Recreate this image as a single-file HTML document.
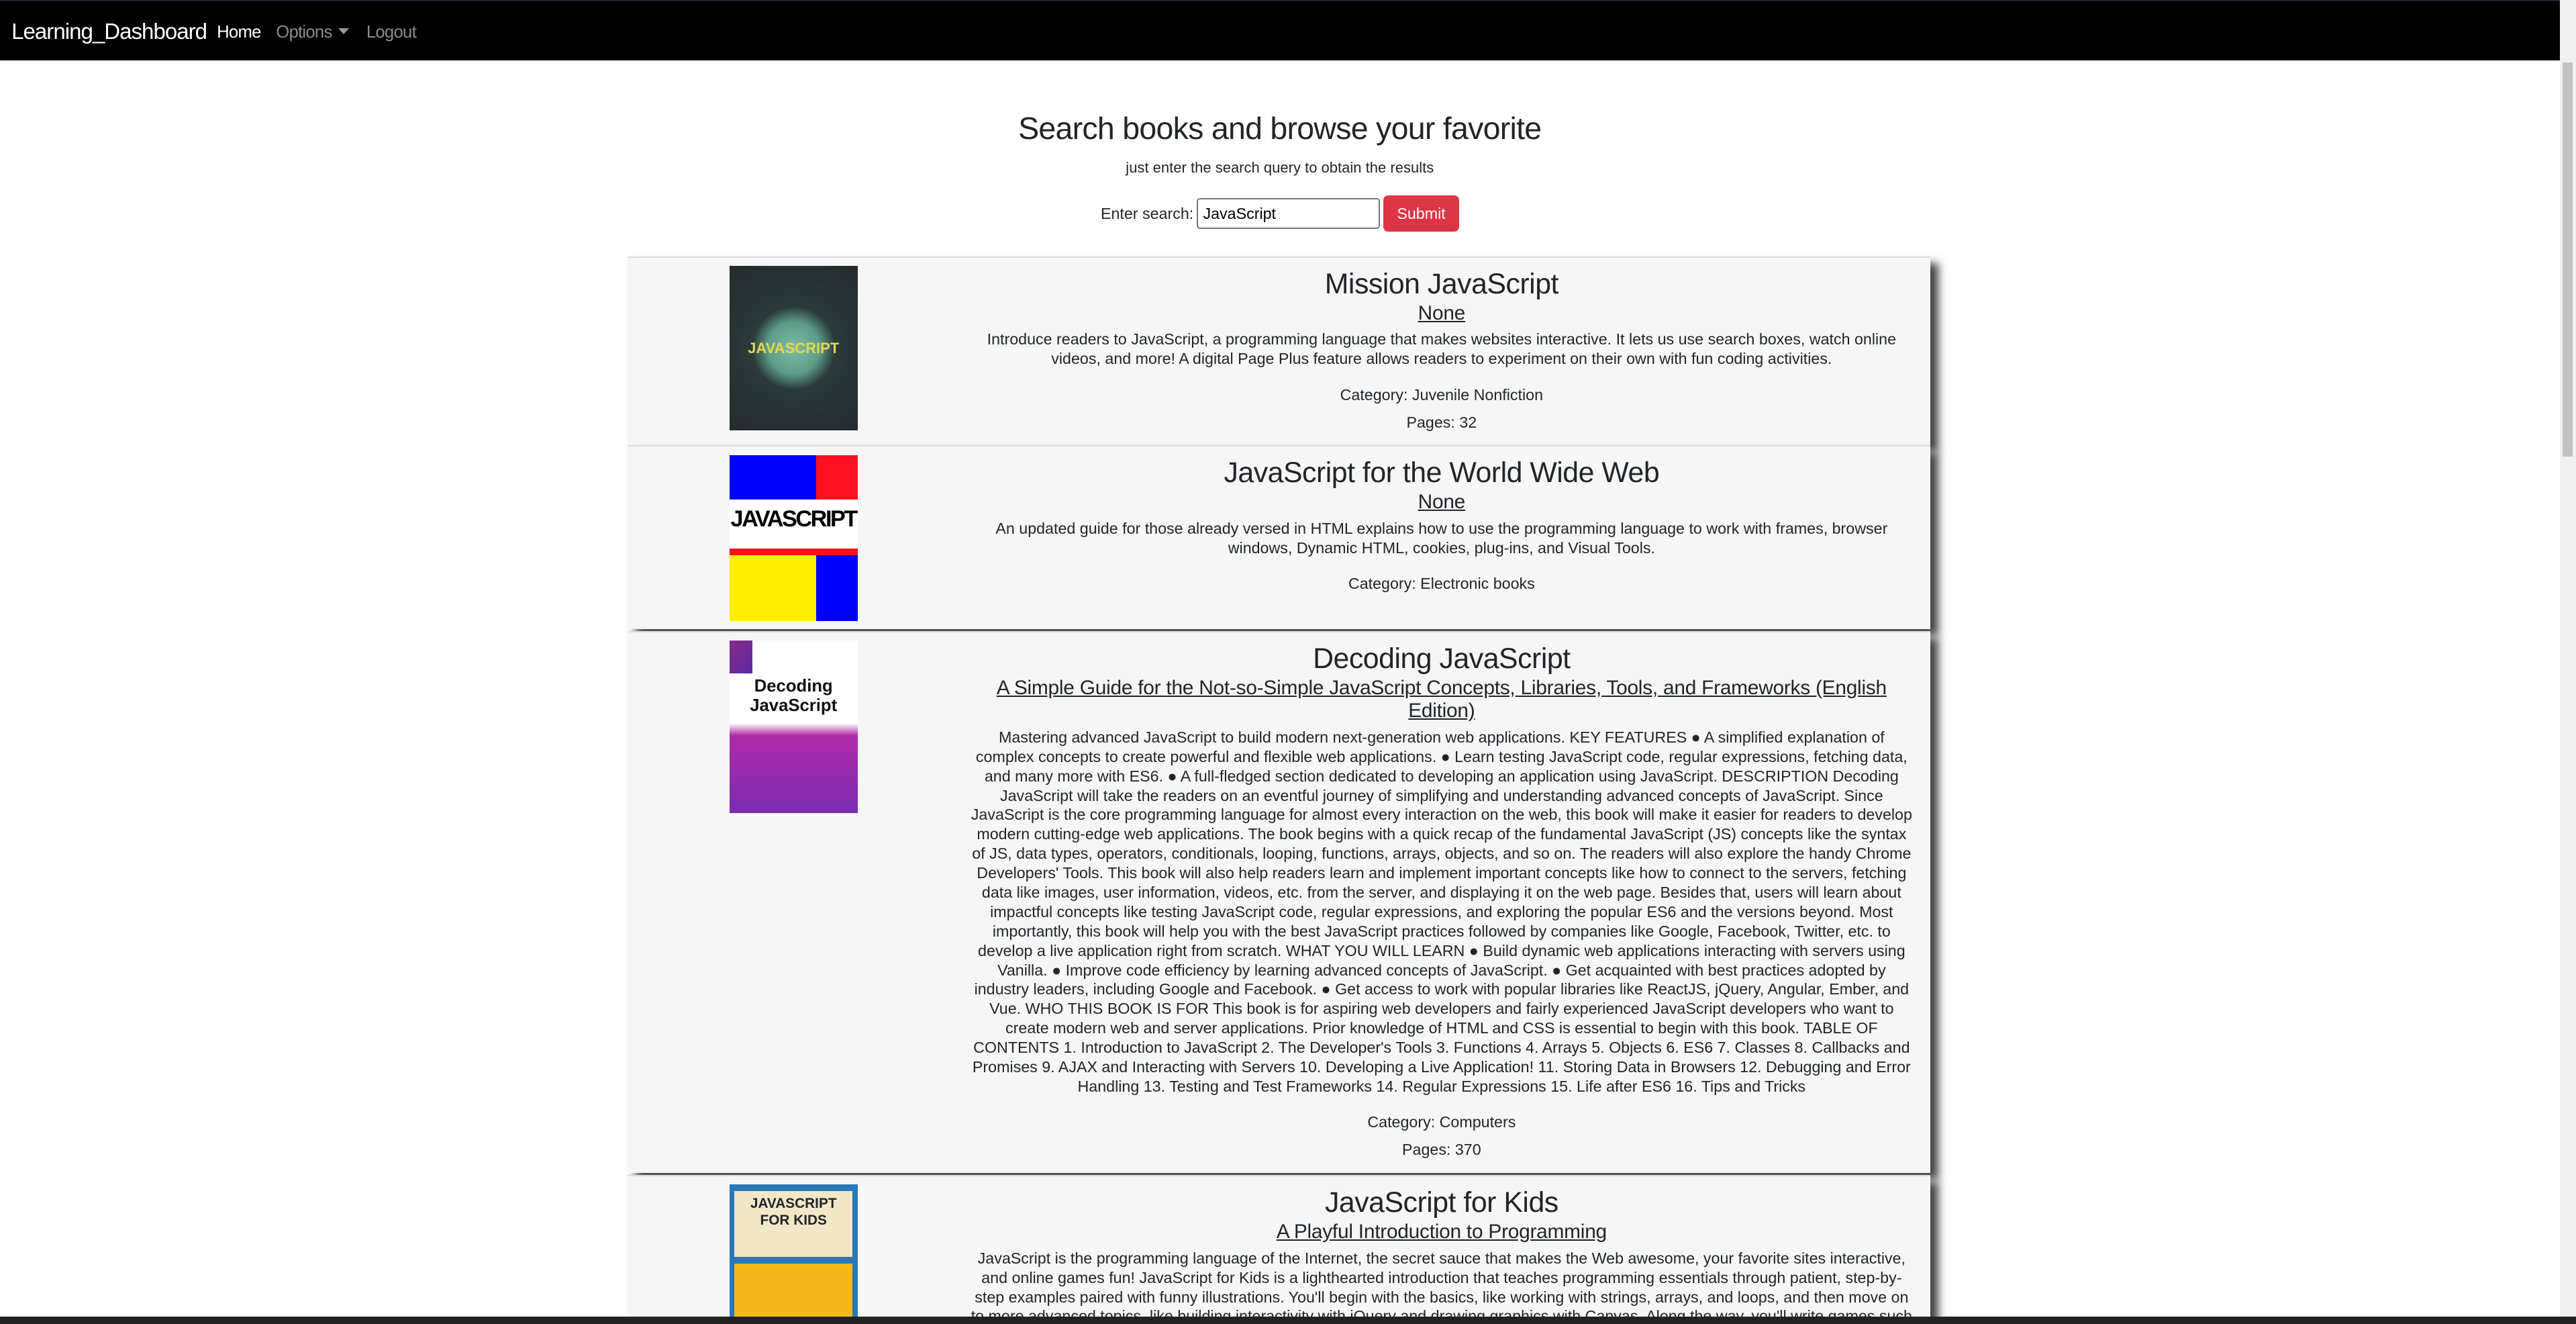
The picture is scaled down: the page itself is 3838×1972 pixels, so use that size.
<!DOCTYPE html>
<html><head><meta charset="utf-8">
<style>
html{margin:0;padding:0;overflow:hidden;height:1972px;}
body{margin:0;padding:0;zoom:2.4477;width:1568px;height:805px;overflow:hidden;background:#fff;font-family:"Liberation Sans",sans-serif;color:#212529;position:relative;}
.nav{position:absolute;left:0;top:0;width:1558px;height:36px;background:#000;border-top:1px solid #1b2530;}
.brand{position:absolute;left:7px;top:11px;font-size:13.5px;color:#fff;letter-spacing:-0.4px}
.nl{position:absolute;top:13px;font-size:10.5px;letter-spacing:-0.3px}
.caret{display:inline-block;border-left:3.5px solid transparent;border-right:3.5px solid transparent;border-top:4px solid #999;vertical-align:2px;margin-left:4px}
.sb{position:absolute;right:0;top:0;width:10px;height:806px;background:#f0f0f0}
.sb i{position:absolute;left:2px;top:38px;width:6px;height:240px;background:#c1c1c1}
h1{position:absolute;left:0;width:1558px;top:67px;margin:0;text-align:center;font-weight:normal;font-size:19px;letter-spacing:-0.3px}
.sub{position:absolute;left:0;width:1558px;top:97px;text-align:center;font-size:9px}
.srch{position:absolute;left:670px;top:119px;font-size:9.5px;display:flex;align-items:center}
.srch input{width:104px;height:15px;border:1px solid #767676;border-radius:2px;margin-left:2px;font-size:9.5px;padding:1px 3px;font-family:inherit}
.srch button{margin-left:2px;width:46px;height:22px;background:#dc3545;color:#fff;border:0;border-radius:3px;font-size:9.5px;font-family:inherit}
.card{position:absolute;left:382px;width:793px;background:#f6f6f6;border-top:1px solid #ddd;box-shadow:5px 4px 5px #444;}
.img{position:absolute;left:62px;top:5px;width:78px;}
.txt{position:absolute;left:209px;width:573px;top:6px;text-align:center;font-size:9.5px;line-height:11.8px;letter-spacing:0}
.t{font-size:17.5px;line-height:20px;letter-spacing:-0.2px}
.s{font-size:12.2px;line-height:14px;text-decoration:underline;margin-top:1px;letter-spacing:-0.1px}
.d{margin-top:3px}
.c{margin-top:10px;font-size:9.5px}
.p{margin-top:5px;font-size:9.5px}
.bot{position:absolute;left:0;top:801px;width:1568px;height:5px;background:#222}
</style></head><body>
<div class="nav">
<div class="brand">Learning_Dashboard</div>
<div class="nl" style="left:132px;color:#fff">Home</div>
<div class="nl" style="left:168px;color:#8c8c8c">Options<span class="caret"></span></div>
<div class="nl" style="left:223px;color:#8c8c8c">Logout</div>
</div>
<div class="sb"><i></i></div>
<h1>Search books and browse your favorite</h1>
<div class="sub">just enter the search query to obtain the results</div>
<div class="srch">Enter search:<input value="JavaScript"><button>Submit</button></div>

<div class="card" style="top:156px;height:114px">
<div class="img" style="height:100px;background:radial-gradient(circle at 50% 50%,#7fbfa8 0,#5c9c88 25%,#2a3a3a 40%,#252a2e 100%)"><div style="position:absolute;top:45px;width:100%;text-align:center;color:#e8d84a;font-size:9px;font-weight:bold">JAVASCRIPT</div></div>
<div class="txt"><div class="t">Mission JavaScript</div><div class="s">None</div>
<div class="d">Introduce readers to JavaScript, a programming language that makes websites interactive. It lets us use search boxes, watch online videos, and more! A digital Page Plus feature allows readers to experiment on their own with fun coding activities.</div>
<div class="c">Category: Juvenile Nonfiction</div><div class="p">Pages: 32</div></div>
</div>

<div class="card" style="top:271px;height:111px">
<div class="img" style="height:101px;background:#fff">
<div style="position:absolute;left:0;top:0;width:53px;height:27px;background:#0000ff"></div>
<div style="position:absolute;left:53px;top:0;width:25px;height:27px;background:#ff1020"></div>
<div style="position:absolute;left:0;top:27px;width:78px;height:30px;color:#000;font-weight:bold;font-size:14px;text-align:center;line-height:24px;letter-spacing:-1px">JAVASCRIPT</div>
<div style="position:absolute;left:0;top:57px;width:78px;height:4px;background:#ff1020"></div>
<div style="position:absolute;left:0;top:61px;width:53px;height:40px;background:#ffee00"></div>
<div style="position:absolute;left:53px;top:61px;width:25px;height:40px;background:#0000ff"></div>
</div>
<div class="txt"><div class="t">JavaScript for the World Wide Web</div><div class="s">None</div>
<div class="d">An updated guide for those already versed in HTML explains how to use the programming language to work with frames, browser windows, Dynamic HTML, cookies, plug-ins, and Visual Tools.</div>
<div class="c">Category: Electronic books</div></div>
</div>

<div class="card" style="top:384px;height:329px">
<div class="img" style="height:105px;background:linear-gradient(#fff 0,#fff 48%,#b02aa8 55%,#7a2bb0 100%)">
<div style="position:absolute;left:0;top:0;width:14px;height:20px;background:linear-gradient(135deg,#8a2a8a,#5a2aa0)"></div>
<div style="position:absolute;top:22px;width:100%;text-align:center;font-weight:bold;font-size:10.5px;line-height:12px;color:#111">Decoding<br>JavaScript</div></div>
<div class="txt"><div class="t">Decoding JavaScript</div><div class="s">A Simple Guide for the Not-so-Simple JavaScript Concepts, Libraries, Tools, and Frameworks (English Edition)</div>
<div class="d">Mastering advanced JavaScript to build modern next-generation web applications. KEY FEATURES ● A simplified explanation of complex concepts to create powerful and flexible web applications. ● Learn testing JavaScript code, regular expressions, fetching data, and many more with ES6. ● A full-fledged section dedicated to developing an application using JavaScript. DESCRIPTION Decoding JavaScript will take the readers on an eventful journey of simplifying and understanding advanced concepts of JavaScript. Since JavaScript is the core programming language for almost every interaction on the web, this book will make it easier for readers to develop modern cutting-edge web applications. The book begins with a quick recap of the fundamental JavaScript (JS) concepts like the syntax of JS, data types, operators, conditionals, looping, functions, arrays, objects, and so on. The readers will also explore the handy Chrome Developers' Tools. This book will also help readers learn and implement important concepts like how to connect to the servers, fetching data like images, user information, videos, etc. from the server, and displaying it on the web page. Besides that, users will learn about impactful concepts like testing JavaScript code, regular expressions, and exploring the popular ES6 and the versions beyond. Most importantly, this book will help you with the best JavaScript practices followed by companies like Google, Facebook, Twitter, etc. to develop a live application right from scratch. WHAT YOU WILL LEARN ● Build dynamic web applications interacting with servers using Vanilla. ● Improve code efficiency by learning advanced concepts of JavaScript. ● Get acquainted with best practices adopted by industry leaders, including Google and Facebook. ● Get access to work with popular libraries like ReactJS, jQuery, Angular, Ember, and Vue. WHO THIS BOOK IS FOR This book is for aspiring web developers and fairly experienced JavaScript developers who want to create modern web and server applications. Prior knowledge of HTML and CSS is essential to begin with this book. TABLE OF CONTENTS 1. Introduction to JavaScript 2. The Developer's Tools 3. Functions 4. Arrays 5. Objects 6. ES6 7. Classes 8. Callbacks and Promises 9. AJAX and Interacting with Servers 10. Developing a Live Application! 11. Storing Data in Browsers 12. Debugging and Error Handling 13. Testing and Test Frameworks 14. Regular Expressions 15. Life after ES6 16. Tips and Tricks</div>
<div class="c">Category: Computers</div><div class="p">Pages: 370</div></div>
</div>

<div class="card" style="top:715px;height:100px">
<div class="img" style="height:100px;background:#2a78b8">
<div style="position:absolute;left:3px;top:4px;width:72px;height:40px;background:#f2e8c8;font-weight:bold;font-size:8.5px;text-align:center;line-height:10px;padding-top:3px;box-sizing:border-box">JAVASCRIPT<br>FOR KIDS</div>
<div style="position:absolute;left:3px;top:48px;width:72px;height:52px;background:#f5b81a"></div></div>
<div class="txt"><div class="t">JavaScript for Kids</div><div class="s">A Playful Introduction to Programming</div>
<div class="d">JavaScript is the programming language of the Internet, the secret sauce that makes the Web awesome, your favorite sites interactive, and online games fun! JavaScript for Kids is a lighthearted introduction that teaches programming essentials through patient, step-by-step examples paired with funny illustrations. You'll begin with the basics, like working with strings, arrays, and loops, and then move on to more advanced topics, like building interactivity with jQuery and drawing graphics with Canvas. Along the way, you'll write games such as Find the Buried Treasure, Hangman, and Snake.</div></div>
</div>
<div class="bot"></div>
</body></html>
